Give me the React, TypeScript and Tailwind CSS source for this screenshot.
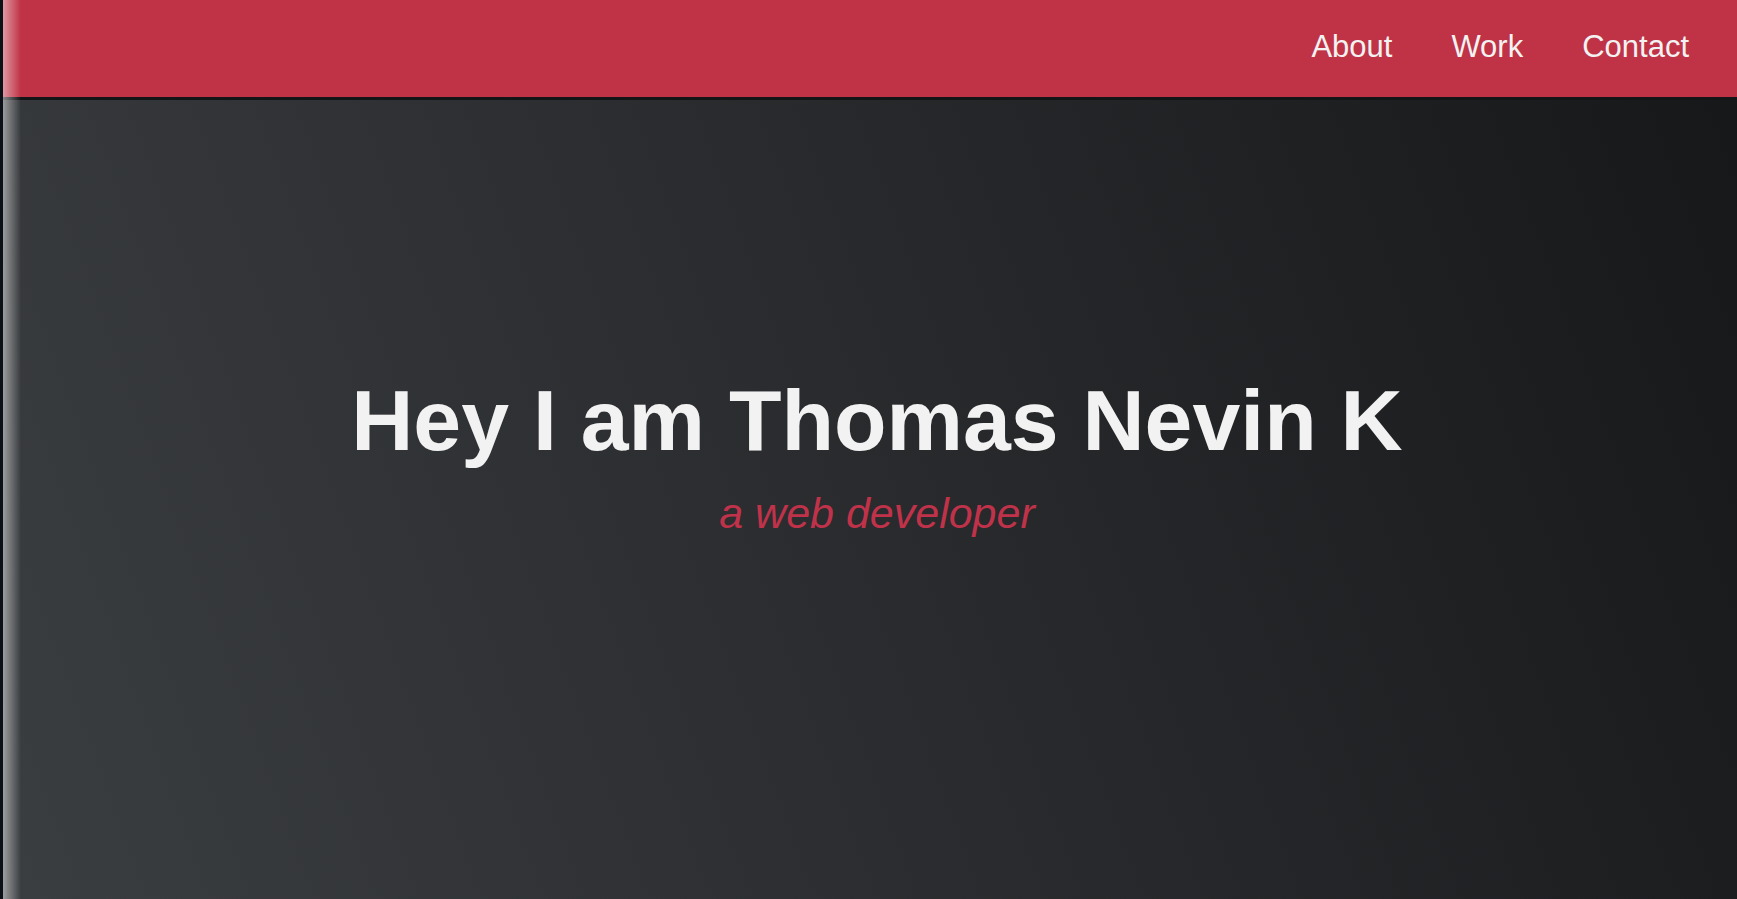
import React from 'react';

const links = ['About', 'Work', 'Contact'];

const App: React.FC = () => {
  return (
    <div className="relative min-h-screen border-l-[3px] border-[#0b1117] bg-[linear-gradient(70deg,#3b3e41,#161719)] font-['Liberation_Sans',Arial,sans-serif]">
      <header className="fixed top-0 left-[3px] right-0 z-10 h-[100px] border-b-[3px] border-[#141517] bg-[#c03246]">
        <nav className="flex h-full items-center justify-end gap-[59px] pr-[48px] pb-[4px]">
          {links.map((l) => (
            <a key={l} href="#" className="text-[31px] leading-none text-[#f2f2f2]">
              {l}
            </a>
          ))}
        </nav>
      </header>

      <main className="flex h-screen flex-col items-center justify-center pt-[10px] pl-[14px] text-center">
        <h1 className="text-[86px] font-bold leading-[1.117] text-[#f2f2f2]">Hey I am Thomas Nevin K</h1>
        <p className="mt-[21px] text-[43px] italic leading-[1.117] text-[#c0324a]">a web developer</p>
      </main>

      {/* left edge glow */}
      <div className="pointer-events-none fixed top-0 bottom-0 left-[3px] z-20 w-[18px] bg-gradient-to-r from-white/50 to-transparent"></div>
    </div>
  );
};

export default App;
